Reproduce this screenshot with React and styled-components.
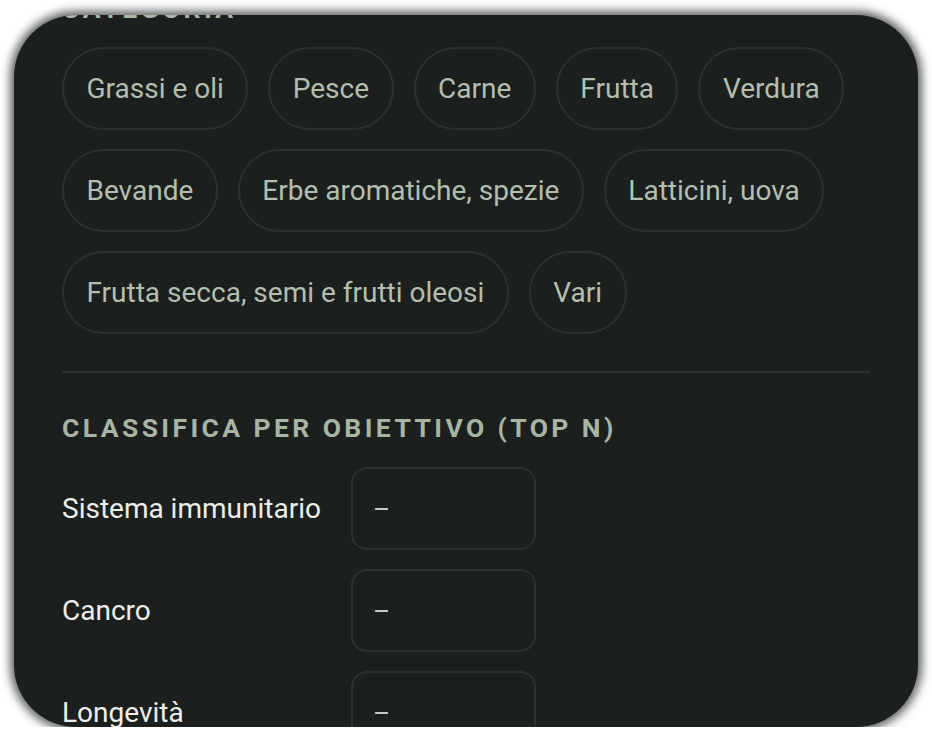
import React from "react";
import styled, { createGlobalStyle } from "styled-components";

const Global = createGlobalStyle`
  html, body {
    margin: 0;
    background: #ffffff;
    font-family: Roboto, "Noto Sans", "Liberation Sans", sans-serif;
  }
`;

const Card = styled.div`
  margin: 15px 14px 0 14px;
  height: 712px;
  border-radius: 62px;
  background: #1b1f1e;
  box-shadow: 0 0 10px 4px rgba(27, 31, 30, 0.7);
  overflow: hidden;
`;

const Content = styled.div`
  padding: 0 48px;
  margin-top: -22px;
`;

const SectionTitle = styled.h2`
  margin: 0;
  font-size: 26.5px;
  line-height: 32px;
  font-weight: 700;
  letter-spacing: 3.4px;
  text-transform: uppercase;
  color: #a7b5a3;
`;

const Chips = styled.div`
  display: flex;
  flex-wrap: wrap;
  gap: 19px 20px;
  margin-top: 22px;
`;

const Chip = styled.button`
  height: 83px;
  padding: 0 22.5px;
  border: 2px solid #2b312f;
  border-radius: 999px;
  background: transparent;
  color: #b3bfad;
  font-family: inherit;
  font-size: 28px;
  display: flex;
  align-items: center;
`;

const Divider = styled.hr`
  margin: 37px 0 39px 0;
  border: none;
  border-top: 2px solid #2b312f;
`;

const Ranking = styled.div`
  display: grid;
  grid-template-columns: auto 185px;
  justify-content: start;
  column-gap: 30px;
  row-gap: 19px;
  margin-top: 23px;
`;

const Label = styled.div`
  align-self: center;
  font-size: 28px;
  color: #eeeee8;
`;

const ValueBox = styled.div`
  height: 83px;
  box-sizing: border-box;
  border: 2px solid #2b312f;
  border-radius: 16px;
  padding: 0 20px;
  display: flex;
  align-items: center;
  font-size: 26px;
  color: #c4cbbf;
`;

const categories = [
  "Grassi e oli",
  "Pesce",
  "Carne",
  "Frutta",
  "Verdura",
  "Bevande",
  "Erbe aromatiche, spezie",
  "Latticini, uova",
  "Frutta secca, semi e frutti oleosi",
  "Vari",
];

const goals = ["Sistema immunitario", "Cancro", "Longevità", "Cuore"];

export default function App() {
  return (
    <>
      <Global />
      <Card>
        <Content>
          <SectionTitle>Categoria</SectionTitle>
          <Chips>
            {categories.map((c) => (
              <Chip key={c}>{c}</Chip>
            ))}
          </Chips>
          <Divider />
          <SectionTitle>Classifica per obiettivo (Top N)</SectionTitle>
          <Ranking>
            {goals.map((g) => (
              <React.Fragment key={g}>
                <Label>{g}</Label>
                <ValueBox>–</ValueBox>
              </React.Fragment>
            ))}
          </Ranking>
        </Content>
      </Card>
    </>
  );
}
